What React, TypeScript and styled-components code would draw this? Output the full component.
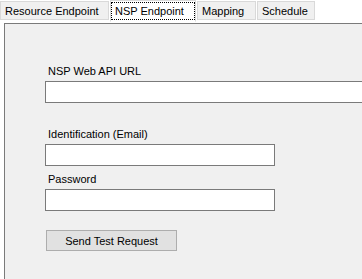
import React from 'react';
import styled, { createGlobalStyle } from 'styled-components';

const tabs = [
  { label: 'Resource Endpoint', width: 109 },
  { label: 'NSP Endpoint', width: 86 },
  { label: 'Mapping', width: 59 },
  { label: 'Schedule', width: 58 },
];

const App: React.FC = () => (
  <>
    <GlobalStyle />
    <Window>
      <TabStrip>
        {tabs.map((t) => (
          <Tab key={t.label} $active={t.label === 'NSP Endpoint'} $width={t.width}>
            <TabLabel $active={t.label === 'NSP Endpoint'}>{t.label}</TabLabel>
          </Tab>
        ))}
      </TabStrip>

      <Page>
        <Form>
          <Label $top={0}>NSP Web API URL</Label>
          <TextBox $wide />

          <Label $top={24}>Identification (Email)</Label>
          <TextBox />

          <Label $top={6}>Password</Label>
          <TextBox type="password" />

          <Button>Send Test Request</Button>
        </Form>
      </Page>
    </Window>
  </>
);

export default App;

/* ── Styles ───────────────────────────────────────── */

const GlobalStyle = createGlobalStyle`
  html, body {
    margin: 0;
    padding: 0;
    background: #ffffff;
    overflow: hidden;
  }
  * {
    box-sizing: border-box;
  }
`;

const Window = styled.div`
  width: 362px;
  height: 279px;
  display: flex;
  flex-direction: column;
  overflow: hidden;
  font-family: 'Liberation Sans', Arial, sans-serif;
  font-size: 11px;
  color: #000;
`;

const TabStrip = styled.div`
  display: flex;
  align-items: flex-start;
  height: 23px;
`;

const Tab = styled.div<{ $active: boolean; $width: number }>`
  width: ${({ $width }) => $width}px;
  height: ${({ $active }) => ($active ? 22 : 19)}px;
  margin-top: ${({ $active }) => ($active ? 0 : 1)}px;
  margin-right: 1px;
  padding: ${({ $active }) => ($active ? '2px 1px' : '0 4px')};
  display: flex;
  align-items: center;
  background: ${({ $active }) => ($active ? '#ffffff' : '#f0f0f0')};
  border: 1px solid #d9d9d9;
  border-bottom: ${({ $active }) => ($active ? '1px solid #ffffff' : '1px solid #d9d9d9')};
`;

const TabLabel = styled.span<{ $active: boolean }>`
  flex: 1;
  height: 100%;
  display: flex;
  align-items: center;
  padding-left: ${({ $active }) => ($active ? 3 : 0)}px;
  outline: ${({ $active }) => ($active ? '1px dotted #000' : 'none')};
  white-space: nowrap;
`;

const Page = styled.div`
  flex: 1;
  min-height: 0;
  overflow: hidden;
  margin-left: 4px;
  background: #f0f0f0;
  border-left: 1px solid #7a7a7a;
  border-top: 1px solid #7a7a7a;
`;

const Form = styled.div`
  display: flex;
  flex-direction: column;
  align-items: flex-start;
  padding: 40px 0 0 40px;
`;

const Label = styled.label<{ $top: number }>`
  display: block;
  height: 14px;
  line-height: 14px;
  margin: ${({ $top }) => $top}px 0 3px 3px;
  white-space: nowrap;
`;

const TextBox = styled.input<{ $wide?: boolean }>`
  width: ${({ $wide }) => ($wide ? '330px' : '230px')};
  height: 22px;
  margin: 0;
  border: 1px solid #7a7a7a;
  background: #ffffff;
  font: inherit;
  padding: 0 3px;
  outline: none;
`;

const Button = styled.button`
  width: 131px;
  height: 21px;
  margin: 19px 0 0 1px;
  padding: 0;
  background: #e1e1e1;
  border: 1px solid #adadad;
  font: inherit;
  color: #000;
`;
